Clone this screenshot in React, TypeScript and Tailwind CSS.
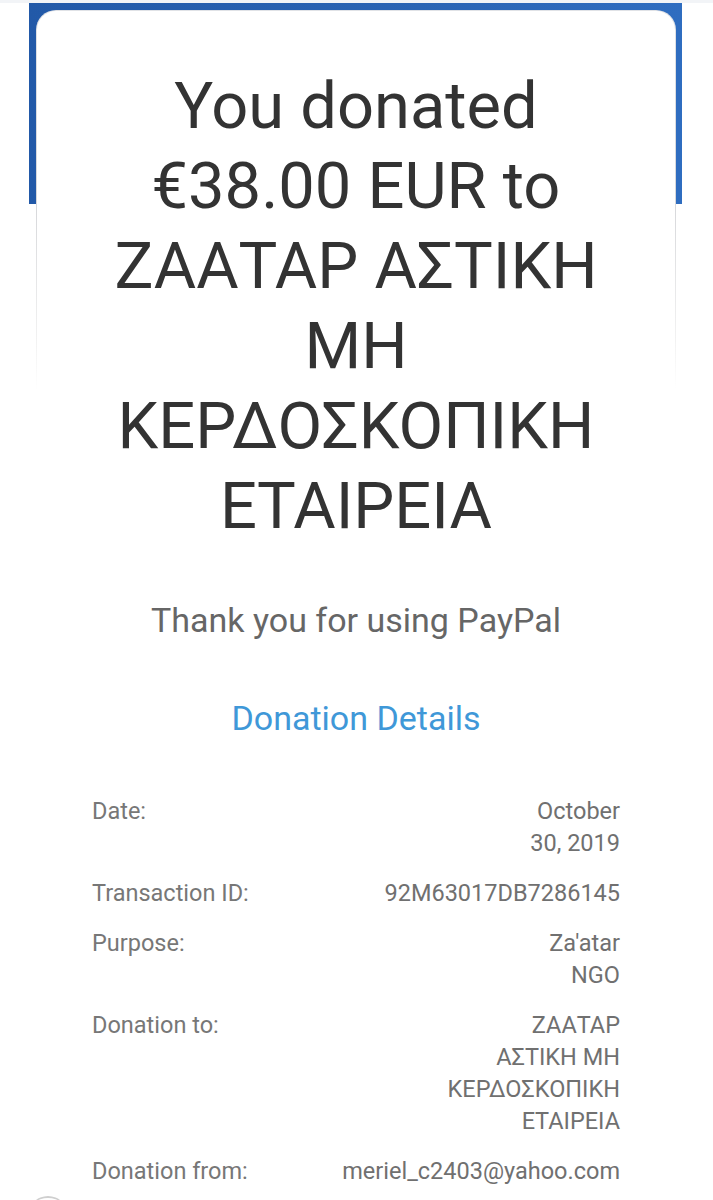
import React from "react";

const rows: { label: string; value: string[] }[] = [
  { label: "Date:", value: ["October", "30, 2019"] },
  { label: "Transaction ID:", value: ["92M63017DB7286145"] },
  { label: "Purpose:", value: ["Za'atar", "NGO"] },
  { label: "Donation to:", value: ["ΖΑΑΤΑΡ", "ΑΣΤΙΚΗ ΜΗ", "ΚΕΡΔΟΣΚΟΠΙΚΗ", "ΕΤΑΙΡΕΙΑ"] },
  { label: "Donation from:", value: ["meriel_c2403@yahoo.com"] },
];

const titleLines = ["You donated", "€38.00 EUR to", "ΖΑΑΤΑΡ ΑΣΤΙΚΗ", "ΜΗ", "ΚΕΡΔΟΣΚΟΠΙΚΗ", "ΕΤΑΙΡΕΙΑ"];

export default function App() {
  return (
    <div
      className="min-h-[1200px] h-[1200px] overflow-hidden bg-white pt-[3px] relative"
      style={{ fontFamily: "Roboto, 'Noto Sans', sans-serif" }}
    >
      <div className="absolute left-0 right-0 top-0 h-[3px] bg-[#f2f4f7]" />
      <div className="mx-[29px] w-[653px] h-[201px] bg-[linear-gradient(90deg,#2259a8,#2a64b4_60%,#2f6dc0)] pt-[7px] pl-[7px] pr-[6px]">
        <div className="rounded-t-[20px] px-px pt-px bg-[linear-gradient(to_bottom,#e0e2e6,#d6d7da_190px,#f2f2f2_330px,#ffffff_380px)] h-[1200px]">
          <div className="rounded-t-[19px] bg-white h-full">
            <div className="pt-[55px] text-center text-[65px] leading-[80px] text-[#333333]">
              {titleLines.map((l) => (
                <div key={l} className="whitespace-nowrap">
                  {l}
                </div>
              ))}
            </div>
            <div className="mt-[54px] text-center text-[34px] leading-[40px] text-[#666666]">
              Thank you for using PayPal
            </div>
            <div className="mt-[58px] text-center text-[34px] leading-[40px] text-[#3f98d8]">
              Donation Details
            </div>
            <div className="mt-[57px] px-[55px] flex flex-col gap-[18px] text-[23.5px] leading-[32px] text-[#777777]">
              {rows.map((r) => (
                <div key={r.label} className="flex justify-between">
                  <div className="whitespace-nowrap">{r.label}</div>
                  <div className="text-right text-[#707070]">
                    {r.value.map((v) => (
                      <div key={v} className="whitespace-nowrap">
                        {v}
                      </div>
                    ))}
                  </div>
                </div>
              ))}
            </div>
          </div>
        </div>
      </div>
      <div className="absolute left-[28px] top-[1196px] w-[40px] h-[40px] rounded-full border-t-2 border-[#cfcfcf]" />
    </div>
  );
}
